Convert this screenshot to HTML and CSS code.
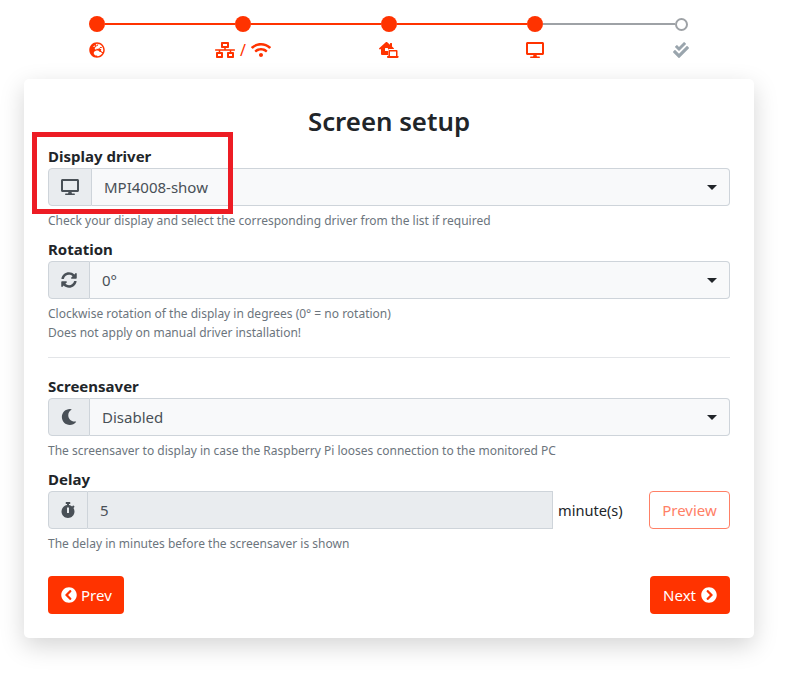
FILE: index.html
```html
<!DOCTYPE html>
<html lang="en">
<head>
  <meta charset="UTF-8">
  <meta name="viewport" content="width=device-width, initial-scale=1.0">
  <title>Screen setup</title>
  <link rel="stylesheet" href="styles.css">
</head>
<body>
  <!-- Wizard steps -->
  <div class="stepper">
    <div class="track">
      <span class="dot"></span><span class="line"></span>
      <span class="dot"></span><span class="line"></span>
      <span class="dot"></span><span class="line"></span>
      <span class="dot"></span><span class="line line-todo"></span>
      <span class="dot dot-todo"></span>
    </div>
    <div class="step-icons">
      <div class="step-icon">
        <svg class="icon-14" viewBox="0 0 496 512"><path d="M248 8C111 8 0 119 0 256s111 248 248 248 248-111 248-248S385 8 248 8zm200 248c0 22.5-3.9 44.2-10.8 64.4h-20.3c-4.3 0-8.4-1.7-11.4-4.8l-32-32.6c-4.5-4.6-4.5-12.1.1-16.7l12.5-12.5v-8.7c0-3-1.2-5.9-3.3-8l-9.4-9.4c-2.1-2.1-5-3.3-8-3.3h-16c-6.2 0-11.3-5.1-11.3-11.3 0-3 1.2-5.9 3.3-8l9.4-9.4c2.1-2.1 5-3.3 8-3.3h32c6.2 0 11.3-5.1 11.3-11.3v-9.4c0-6.2-5.1-11.3-11.3-11.3h-36.7c-8.8 0-16 7.2-16 16v4.5c0 6.9-4.4 13-10.9 15.2l-31.6 10.5c-3.3 1.1-5.5 4.1-5.5 7.6v2.2c0 4.4-3.6 8-8 8h-16c-4.4 0-8-3.6-8-8s-3.6-8-8-8H247c-3 0-5.8 1.7-7.2 4.4l-9.4 18.7c-2.7 5.4-8.2 8.8-14.3 8.8H194c-8.8 0-16-7.2-16-16V199c0-4.2 1.7-8.3 4.7-11.3l20.1-20.1c4.6-4.6 7.2-10.9 7.2-17.5 0-3.4 2.2-6.5 5.5-7.6l40-13.3c1.7-.6 3.2-1.5 4.4-2.7l26.8-26.8c2.1-2.1 3.3-5 3.3-8 0-6.2-5.1-11.3-11.3-11.3H258l-16 16v8c0 4.4-3.6 8-8 8h-16c-4.4 0-8-3.6-8-8v-20c0-2.5 1.2-4.9 3.2-6.4l28.9-21.7c1.9-.1 3.8-.3 5.7-.3C358.3 56 448 145.7 448 256zM130.1 149.1c0-3 1.2-5.9 3.3-8l25.4-25.4c2.1-2.1 5-3.3 8-3.3 6.2 0 11.3 5.1 11.3 11.3v16c0 3-1.2 5.9-3.3 8l-9.4 9.4c-2.1 2.1-5 3.3-8 3.3h-16c-6.2 0-11.3-5.1-11.3-11.3zm128 306.4v-7.1c0-8.8-7.2-16-16-16h-20.2c-10.8 0-26.7-5.3-35.4-11.8l-22.2-16.7c-11.5-8.6-18.2-22.1-18.2-36.4v-23.9c0-16 8.4-30.8 22.1-39l42.9-25.7c7.1-4.2 15.2-6.5 23.4-6.5h31.2c10.9 0 21.4 3.9 29.6 10.9l43.2 37.1h18.3c8.5 0 16.6 3.4 22.6 9.4l17.3 17.3c3.4 3.4 8.1 5.3 12.9 5.3H423c-32.4 58.9-93.8 99.5-164.9 103.1z"/></svg>
      </div>
      <div class="step-icon">
        <svg class="icon-wide" viewBox="0 0 640 512"><path d="M640 264v-16c0-8.84-7.16-16-16-16H344v-40h72c17.67 0 32-14.33 32-32V32c0-17.67-14.33-32-32-32H224c-17.67 0-32 14.33-32 32v128c0 17.67 14.33 32 32 32h72v40H16c-8.84 0-16 7.16-16 16v16c0 8.84 7.16 16 16 16h104v40H64c-17.67 0-32 14.33-32 32v128c0 17.67 14.33 32 32 32h160c17.67 0 32-14.33 32-32V352c0-17.67-14.33-32-32-32h-56v-40h304v40h-56c-17.67 0-32 14.33-32 32v128c0 17.67 14.33 32 32 32h160c17.67 0 32-14.33 32-32V352c0-17.67-14.33-32-32-32h-56v-40h104c8.84 0 16-7.16 16-16zM256 128V64h128v64H256zm-64 320H96v-64h96v64zm352 0h-96v-64h96v64z"/></svg>
        <span class="slash">/</span>
        <svg class="icon-wide" viewBox="0 0 640 512"><path d="M634.91 154.88C457.74-8.99 182.19-8.93 5.09 154.88c-6.66 6.16-6.79 16.59-.35 22.98l34.24 33.97c6.14 6.1 16.02 6.23 22.4.38 145.92-133.68 371.3-133.71 517.25 0 6.38 5.85 16.26 5.71 22.4-.38l34.24-33.97c6.43-6.39 6.3-16.82-.36-22.98zM320 352c-35.35 0-64 28.65-64 64s28.65 64 64 64 64-28.65 64-64-28.65-64-64-64zm202.67-83.59c-115.26-101.93-290.21-101.82-405.34 0-6.9 6.1-7.12 16.69-.57 23.15l34.44 33.99c6 5.92 15.66 6.32 22.05.8 83.95-72.57 209.74-72.41 293.49 0 6.39 5.52 16.05 5.13 22.05-.8l34.44-33.99c6.56-6.46 6.33-17.06-.56-23.15z"/></svg>
      </div>
      <div class="step-icon">
        <svg class="icon-wide" viewBox="0 0 640 512"><path d="M272 288H208a16 16 0 0 1-16-16V208a16 16 0 0 1 16-16h64a16 16 0 0 1 16 16v37.12C299.11 232.24 315 224 332.8 224H469.74l6.65-7.53A16.51 16.51 0 0 0 480 207a16.31 16.31 0 0 0-4.75-10.61L416 144V48a16 16 0 0 0-16-16H368a16 16 0 0 0-16 16V87.3L263.5 8.92C258 4 247.45 0 240.05 0s-17.93 4-23.43 8.92L4.78 196.42A16.15 16.15 0 0 0 0 207a16.4 16.4 0 0 0 3.55 9.39L22.34 237.7A16.22 16.22 0 0 0 33 242.48 16.51 16.51 0 0 0 42.34 239L64 219.88V384a32 32 0 0 0 32 32H288V288ZM624 448H592V288a32 32 0 0 0-32-32H332.8a32 32 0 0 0-32 32v160H272a16 16 0 0 0-16 16v16a32 32 0 0 0 32 32H592a32 32 0 0 0 32-32V464A16 16 0 0 0 624 448Zm-80 0H352V304H544Z" fill-rule="evenodd"/></svg>
      </div>
      <div class="step-icon">
        <svg class="icon-wide" viewBox="0 0 576 512"><path d="M528 0H48C21.5 0 0 21.5 0 48v320c0 26.5 21.5 48 48 48h192l-16 48h-72c-13.3 0-24 10.7-24 24s10.7 24 24 24h272c13.3 0 24-10.7 24-24s-10.7-24-24-24h-72l-16-48h192c26.5 0 48-21.5 48-48V48c0-26.5-21.5-48-48-48zm-16 352H64V64h448v288z"/></svg>
      </div>
      <div class="step-icon step-icon-todo">
        <svg class="icon-14" viewBox="0 0 512 512"><path d="M505 174.8l-39.6-39.6c-9.4-9.4-24.6-9.4-33.9 0L192 374.7 80.6 263.2c-9.4-9.4-24.6-9.4-33.9 0L7 302.9c-9.4 9.4-9.4 24.6 0 34L175 505c9.4 9.4 24.6 9.4 33.9 0l296-296.2c9.4-9.5 9.4-24.7.1-34zm-324.3 106c6.2 6.3 16.4 6.3 22.6 0l208-208.2c6.2-6.3 6.2-16.4 0-22.6L366.1 4.7c-6.2-6.3-16.4-6.3-22.6 0L192 156.2l-55.4-55.5c-6.2-6.3-16.4-6.3-22.6 0L68.7 146c-6.2 6.3-6.2 16.4 0 22.6l112 112.2z"/></svg>
      </div>
    </div>
  </div>

  <!-- Setup card -->
  <div class="card">
    <h3 class="title">Screen setup</h3>

    <label class="field-label">Display driver</label>
    <div class="input-group">
      <span class="addon addon-driver">
        <svg class="addon-icon" viewBox="0 0 576 512"><path d="M528 0H48C21.5 0 0 21.5 0 48v320c0 26.5 21.5 48 48 48h192l-16 48h-72c-13.3 0-24 10.7-24 24s10.7 24 24 24h272c13.3 0 24-10.7 24-24s-10.7-24-24-24h-72l-16-48h192c26.5 0 48-21.5 48-48V48c0-26.5-21.5-48-48-48zm-16 352H64V64h448v288z"/></svg>
      </span>
      <div class="select">MPI4008-show<span class="caret"></span></div>
    </div>
    <small class="hint">Check your display and select the corresponding driver from the list if required</small>

    <label class="field-label">Rotation</label>
    <div class="input-group">
      <span class="addon addon-rotation">
        <svg class="addon-icon" viewBox="0 0 512 512"><path d="M370.72 133.28C339.458 104.008 298.888 87.962 255.848 88c-77.458.068-144.328 53.178-162.791 126.85-1.344 5.363-6.122 9.15-11.651 9.15H24.103c-7.498 0-13.194-6.807-11.807-14.176C33.933 94.924 134.813 8 256 8c66.448 0 126.791 26.136 171.315 68.685L463.03 40.97C478.149 25.851 504 36.559 504 57.941V192c0 13.255-10.745 24-24 24H345.941c-21.382 0-32.09-25.851-16.971-40.971l41.75-41.749zM32 296h134.059c21.382 0 32.09 25.851 16.971 40.971l-41.75 41.75c31.262 29.273 71.835 45.319 114.876 45.28 77.418-.07 144.315-53.144 162.787-126.849 1.344-5.363 6.122-9.15 11.651-9.15h57.304c7.498 0 13.194 6.807 11.807 14.176C478.067 417.076 377.187 504 256 504c-66.448 0-126.791-26.136-171.315-68.685L48.97 471.03C33.851 486.149 8 475.441 8 454.059V320c0-13.255 10.745-24 24-24z"/></svg>
      </span>
      <div class="select">0°<span class="caret"></span></div>
    </div>
    <small class="hint">Clockwise rotation of the display in degrees (0° = no rotation)<br>Does not apply on manual driver installation!</small>

    <hr class="divider">

    <label class="field-label">Screensaver</label>
    <div class="input-group">
      <span class="addon addon-rotation">
        <svg class="addon-icon" viewBox="0 0 512 512"><path d="M283.211 512c78.962 0 151.079-35.925 198.857-94.792 7.068-8.708-.639-21.43-11.562-19.35-124.203 23.654-238.262-71.576-238.262-196.954 0-72.222 38.662-138.635 101.498-174.394 9.686-5.512 7.25-20.197-3.756-22.23A258.156 258.156 0 0 0 283.211 0c-141.309 0-256 114.511-256 256 0 141.309 114.511 256 256 256z"/></svg>
      </span>
      <div class="select">Disabled<span class="caret"></span></div>
    </div>
    <small class="hint">The screensaver to display in case the Raspberry Pi looses connection to the monitored PC</small>

    <label class="field-label">Delay</label>
    <div class="delay-row">
      <div class="input-group delay-group">
        <span class="addon addon-delay">
          <svg class="addon-icon" viewBox="0 0 448 512"><path d="M432 304c0 114.9-93.1 208-208 208S16 418.9 16 304c0-104 76.3-190.2 176-205.5V64h-28c-6.6 0-12-5.4-12-12V12c0-6.6 5.4-12 12-12h120c6.6 0 12 5.4 12 12v40c0 6.6-5.4 12-12 12h-28v34.5c37.5 5.8 71.7 21.6 99.7 44.6l27.5-27.5c4.7-4.7 12.3-4.7 17 0l28.3 28.3c4.7 4.7 4.7 12.3 0 17l-29.4 29.4-.6.6C419.7 223.3 432 262.2 432 304zm-176 36V188.5c0-6.6-5.4-12-12-12h-40c-6.6 0-12 5.4-12 12V340c0 6.6 5.4 12 12 12h40c6.6 0 12-5.4 12-12z"/></svg>
        </span>
        <div class="select select-disabled">5</div>
      </div>
      <span class="unit">minute(s)</span>
      <button type="button" class="button-outline">Preview</button>
    </div>
    <small class="hint">The delay in minutes before the screensaver is shown</small>

    <div class="nav-row">
      <button type="button" class="button button-prev">
        <svg class="button-icon" viewBox="0 0 512 512"><path d="M256 504C119 504 8 393 8 256S119 8 256 8s248 111 248 248-111 248-248 248zM142.1 273l135.5 135.5c9.4 9.4 24.6 9.4 33.9 0l17-17c9.4-9.4 9.4-24.6 0-33.9L226.9 256l101.6-101.6c9.4-9.4 9.4-24.6 0-33.9l-17-17c-9.4-9.4-24.6-9.4-33.9 0L142.1 239c-9.4 9.4-9.4 24.6 0 34z"/></svg>
        Prev
      </button>
      <button type="button" class="button">
        Next
        <svg class="button-icon" viewBox="0 0 512 512"><path d="M256 8c137 0 248 111 248 248S393 504 256 504 8 393 8 256 119 8 256 8zm113.9 231L234.4 103.5c-9.4-9.4-24.6-9.4-33.9 0l-17 17c-9.4 9.4-9.4 24.6 0 33.9L285.1 256 183.5 357.6c-9.4 9.4-9.4 24.6 0 33.9l17 17c9.4 9.4 24.6 9.4 33.9 0L369.9 273c9.4-9.4 9.4-24.6 0-34z"/></svg>
      </button>
    </div>

    <!-- Annotation drawn over the form -->
    <div class="highlight"></div>
  </div>
</body>
</html>
```

FILE: styles.css
```css
/* General Styles */
body {
  font-family: 'Noto Sans', sans-serif;
  font-size: 16px;
  margin: 0;
  padding: 16px 44px 39px 24px;
  background-color: #fff;
  color: #212529;
}

/* Stepper */
.track {
  display: flex;
  align-items: center;
  padding-left: 65px;
}

.dot {
  width: 16px;
  height: 16px;
  border-radius: 50%;
  background-color: #ff3300;
  flex-shrink: 0;
}

.dot-todo {
  width: 13px;
  height: 13px;
  box-sizing: border-box;
  background-color: #fff;
  border: 2px solid #9ea2a6;
}

.line {
  flex: 0 0 130px;
  height: 2px;
  background-color: #ff3300;
}

.line-todo {
  flex-basis: 132px;
  background-color: #9ea2a6;
}

.step-icons {
  display: grid;
  grid-template-columns: repeat(5, 146px);
  margin-top: 10px;
  height: 29px;
  color: #ff3300;
}

.step-icon {
  display: flex;
  justify-content: center;
  align-items: flex-start;
  gap: 5px;
  fill: currentColor;
}

.step-icon-todo {
  color: #9aa5ad;
}

.icon-14 {
  width: 16px;
  height: 16px;
}

.icon-wide {
  width: 20px;
  height: 16px;
}

.slash {
  font-size: 16px;
  line-height: 17px;
}

/* Card */
.card {
  position: relative;
  background: #fff;
  margin-top: 8px;
  padding: 24px;
  border-radius: 5px;
  box-shadow: 0 8px 24px rgba(0, 0, 0, 0.17);
}

.title {
  margin: 0 0 7px;
  font-size: 25.8px;
  font-weight: 600;
  line-height: 36px;
  text-align: center;
}

.field-label {
  display: block;
  font-weight: 700;
  font-size: 15px;
  line-height: 20px;
  margin-bottom: 2px;
}

.input-group {
  display: flex;
  height: 38px;
}

.addon {
  display: flex;
  align-items: center;
  justify-content: center;
  box-sizing: border-box;
  background-color: #e9ecef;
  border: 1px solid #ced4da;
  border-radius: 4px 0 0 4px;
  fill: #495057;
}

.addon-driver {
  width: 44px;
}

.addon-rotation {
  width: 42px;
}

.addon-delay {
  width: 40px;
}

.addon-icon {
  width: 18px;
  height: 16px;
}

.select {
  flex: 1;
  display: flex;
  align-items: center;
  justify-content: space-between;
  padding: 0 12px;
  background-color: #f8f9fa;
  border: 1px solid #ced4da;
  border-left: 0;
  border-radius: 0 4px 4px 0;
  font-size: 15px;
  color: #495057;
}

.select-disabled {
  background-color: #e9ecef;
  border-radius: 0;
}

.caret {
  width: 0;
  height: 0;
  border-top: 5px solid #212529;
  border-left: 5px solid transparent;
  border-right: 5px solid transparent;
}

.hint {
  display: block;
  margin: 5px 0 9px;
  font-size: 12px;
  line-height: 19px;
  color: #6c757d;
}

.divider {
  border: 0;
  border-top: 1px solid #e3e5e8;
  margin: 15px 0 18px;
}

.delay-row {
  display: flex;
  align-items: center;
}

.delay-group {
  width: 505px;
}

.unit {
  margin-left: 5px;
  font-size: 14.6px;
}

.button-outline {
  margin-left: auto;
  width: 81px;
  height: 38px;
  background: #fff;
  border: 1px solid #ff8066;
  border-radius: 4px;
  color: #ff8066;
  font-family: inherit;
  font-size: 15px;
}

.nav-row {
  display: flex;
  justify-content: space-between;
  margin-top: 23px;
}

.button {
  display: flex;
  align-items: center;
  gap: 5px;
  height: 38px;
  padding: 0 13px;
  background-color: #ff3300;
  border: none;
  border-radius: 4px;
  color: #fff;
  font-family: inherit;
  font-size: 15px;
}

.button-prev {
  gap: 4px;
  padding-right: 12px;
}

.button-icon {
  width: 16px;
  height: 16px;
  fill: #fff;
}

/* Red annotation box */
.highlight {
  position: absolute;
  left: 8px;
  top: 53px;
  width: 201px;
  height: 82px;
  box-sizing: border-box;
  border: 5px solid #ed1c24;
}
```
